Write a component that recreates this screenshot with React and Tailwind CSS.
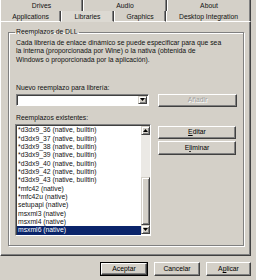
const font = { fontFamily: '"Liberation Sans", Arial, sans-serif' }

function Arrow({ up, disabled }) {
  return (
    <svg width="5" height="3" viewBox="0 0 5 3">
      <path d={up ? 'M2.5 0L5 3H0z' : 'M0 0h5L2.5 3z'} fill={disabled ? '#808080' : '#000'} />
    </svg>
  )
}

function Button({ className = '', children, isDefault, disabled }) {
  return (
    <div className={`${isDefault ? 'border border-black' : ''} ${className}`}>
      <div className="h-full w-full flex items-center justify-center border border-t-white border-l-white border-r-[#404040] border-b-[#404040] shadow-[inset_-1px_-1px_0_#808080]">
        <span className={disabled ? 'text-[#a0a0a0] [text-shadow:1px_1px_0_#fff]' : 'text-black'}>{children}</span>
      </div>
    </div>
  )
}

function Tab({ label, w, selected, back }) {
  return (
    <div
      className={`${w} h-full flex items-center justify-center border-l border-l-white border-r border-r-[#404040] shadow-[inset_-1px_0_0_#808080] ${
        back ? '' : selected ? 'border-b border-b-transparent bg-[#dcd9d2] pt-[1px]' : 'border-b border-b-white pt-[1px]'
      }`}
    >
      {label}
    </div>
  )
}

const items = [
  '*d3dx9_36 (native, builtin)',
  '*d3dx9_37 (native, builtin)',
  '*d3dx9_38 (native, builtin)',
  '*d3dx9_39 (native, builtin)',
  '*d3dx9_40 (native, builtin)',
  '*d3dx9_42 (native, builtin)',
  '*d3dx9_43 (native, builtin)',
  '*mfc42 (native)',
  '*mfc42u (native)',
  'setupapi (native)',
  'msxml3 (native)',
  'msxml4 (native)',
  'msxml6 (native)',
]

export default function App() {
  return (
    <div style={font} className="w-[256px] h-[280px] bg-[#d4d0c8] text-[#111] text-[6.8px] leading-[8px] overflow-hidden">
      {/* Tabs - back row */}
      <div className="flex h-[11px]">
        <Tab back label="Drives" w="w-[83px]" />
        <Tab back label="Audio" w="w-[84px]" />
        <Tab back label="About" w="w-[84px]" />
      </div>
      {/* Tabs - front row */}
      <div className="flex h-[11px]">
        <Tab label="Applications" w="w-[61px]" />
        <Tab selected label="Libraries" w="w-[53px]" />
        <Tab label="Graphics" w="w-[52px]" />
        <Tab label="Desktop Integration" w="w-[85px]" />
      </div>

      {/* Panel */}
      <div className="w-[251px] h-[234px] border-l border-l-white border-r border-r-[#404040] border-b border-b-[#404040] shadow-[inset_-1px_-1px_0_#808080] pl-[7px] pt-[6px]">
        <fieldset className="w-[236px] h-[218px] border border-[#808080] shadow-[inset_1px_1px_0_#fff,1px_1px_0_#fff] pl-[7px] pr-[6px]">
          <legend className="px-[1px] -ml-[1px] leading-[8px]">Reemplazos de DLL</legend>
          <p className="mt-[3px] leading-[8.33px] whitespace-nowrap">
            Cada librería de enlace dinámico se puede especificar para que sea
            <br />
            la interna (proporcionada por Wine) o la nativa (obtenida de
            <br />
            Windows o proporcionada por la aplicación).
          </p>

          <div className="mt-[20px]">Nuevo reemplazo para librería:</div>
          <div className="flex mt-[2px] gap-[9px]">
            <div className="w-[133px] h-[12px] bg-white border border-t-[#808080] border-l-[#808080] border-b-white border-r-white shadow-[inset_1px_1px_0_#404040] flex justify-end p-[1px]">
              <div className="w-[9px] h-full bg-[#d4d0c8] border border-t-[#d4d0c8] border-l-[#d4d0c8] border-r-[#404040] border-b-[#404040] shadow-[inset_1px_1px_0_#fff,inset_-1px_-1px_0_#808080] flex items-center justify-center">
                <Arrow />
              </div>
            </div>
            <Button disabled className="w-[79px] h-[13px]">Añadir</Button>
          </div>

          <div className="mt-[7px]">Reemplazos existentes:</div>
          <div className="flex mt-[2px] gap-[7px]">
            <div className="w-[136px] h-[112px] -ml-[1px] bg-white border border-t-[#808080] border-l-[#808080] border-b-white border-r-white shadow-[inset_1px_1px_0_#404040] flex pt-[1.5px] pl-[1px]">
              <div className="flex-1 flex flex-col">
                {items.map((it, i) => (
                  <div
                    key={it}
                    className={`h-[8.33px] leading-[8.33px] pl-[1px] whitespace-nowrap ${
                      i === items.length - 1 ? 'bg-[#0a246a] text-white' : ''
                    }`}
                  >
                    {it}
                  </div>
                ))}
              </div>
              {/* Scrollbar */}
              <div className="w-[9px] flex flex-col pb-[1px]">
                <div className="h-[9px] bg-[#d4d0c8] border border-t-[#d4d0c8] border-l-[#d4d0c8] border-r-[#404040] border-b-[#404040] shadow-[inset_1px_1px_0_#fff,inset_-1px_-1px_0_#808080] flex items-center justify-center">
                  <Arrow up />
                </div>
                <div className="flex-1 bg-[#ebe9e5] flex flex-col justify-end">
                  <div className="h-[48px] bg-[#d4d0c8] border border-t-[#d4d0c8] border-l-[#d4d0c8] border-r-[#404040] border-b-[#404040] shadow-[inset_1px_1px_0_#fff,inset_-1px_-1px_0_#808080]" />
                </div>
                <div className="h-[9px] bg-[#d4d0c8] border border-t-[#d4d0c8] border-l-[#d4d0c8] border-r-[#404040] border-b-[#404040] shadow-[inset_1px_1px_0_#fff,inset_-1px_-1px_0_#808080] flex items-center justify-center">
                  <Arrow />
                </div>
              </div>
            </div>
            <div className="flex flex-col gap-[2px] pt-[2px]">
              <Button className="w-[78px] h-[13px]">
                <span className="underline">E</span>ditar
              </Button>
              <Button className="w-[78px] h-[14px]">
                E<span className="underline">l</span>iminar
              </Button>
            </div>
          </div>
        </fieldset>
      </div>

      {/* Dialog buttons */}
      <div className="flex justify-end gap-[6px] pr-[5px] mt-[6px]">
        <Button isDefault className="w-[48px] h-[14px]">Aceptar</Button>
        <Button className="w-[46px] h-[14px]">Cancelar</Button>
        <Button className="w-[45px] h-[14px]">
          A<span className="underline">p</span>licar
        </Button>
      </div>
    </div>
  )
}
